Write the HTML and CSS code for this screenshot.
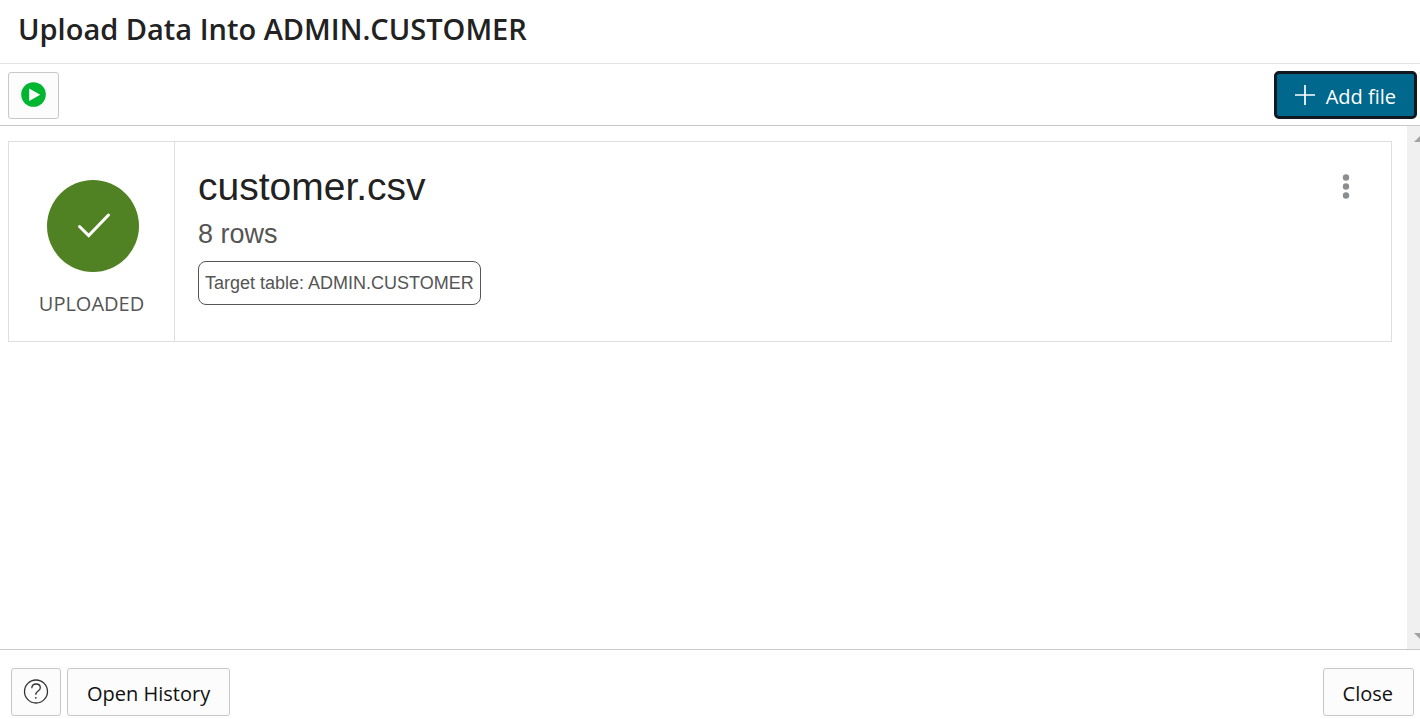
FILE: index.html
```html
<!DOCTYPE html>
<html lang="en">
<head>
<meta charset="utf-8">
<meta name="viewport" content="width=device-width, initial-scale=1">
<title>Upload Data Into ADMIN.CUSTOMER</title>
<link rel="stylesheet" href="styles.css">
</head>
<body>
<div class="dialog">
  <header class="dialog-header">
    <h1 class="dialog-title">Upload Data Into ADMIN.CUSTOMER</h1>
  </header>
  <div class="toolbar">
    <button class="btn btn-icon btn-run" type="button" aria-label="Run">
      <svg width="25" height="26" viewBox="0 0 25 26" aria-hidden="true"><circle cx="12.500" cy="12.500" r="12.300" fill="#00b52f"/><path d="M8.200 6.500v12.400L19.200 12.700Z" fill="#fff"/></svg>
    </button>
    <button class="btn btn-primary" type="button">
      <svg width="20" height="20" viewBox="0 0 20 20" aria-hidden="true"><path d="M10 0v20M0 10h20" stroke="#fff" stroke-width="1.700"/></svg>
      <span>Add file</span>
    </button>
  </div>
  <main class="content">
    <div class="file-list">
      <article class="file-card">
        <div class="file-status">
          <svg class="status-icon" width="92" height="92" viewBox="0 0 92 92" aria-hidden="true"><circle cx="46" cy="46" r="46" fill="#508223"/><path d="M32.500 46.500l9.200 9L61.500 35" fill="none" stroke="#fff" stroke-width="3" stroke-linecap="round"/></svg>
          <span class="status-label">UPLOADED</span>
        </div>
        <div class="file-info">
          <h2 class="file-name">customer.csv</h2>
          <p class="file-rows">8 rows</p>
          <span class="file-target">Target table: ADMIN.CUSTOMER</span>
        </div>
        <button class="menu-button" type="button" aria-label="File actions">
          <svg width="8" height="26" viewBox="0 0 8 26" aria-hidden="true" fill="#8b8e91"><circle cx="4" cy="3.500" r="3.200"/><circle cx="4" cy="12.500" r="3.200"/><circle cx="4" cy="21.500" r="3.200"/></svg>
        </button>
      </article>
    </div>
    <div class="scroll-track" aria-hidden="true">
      <svg width="6" height="6" viewBox="0 0 6 6"><path d="M0 6L6 0V6Z" fill="#a3a3a3"/></svg>
      <svg width="6" height="6" viewBox="0 0 6 6"><path d="M0 0H6V6Z" fill="#a3a3a3"/></svg>
    </div>
  </main>
  <footer class="dialog-footer">
    <button class="btn btn-icon" type="button" aria-label="Help">
      <svg width="26" height="26" viewBox="0 0 26 26" aria-hidden="true" fill="none" stroke="#333" stroke-width="1.300"><circle cx="13" cy="13.500" r="11.500"/><path d="M8.800 10.200C8.800 7.500 10.500 6 13 6s4.300 1.400 4.300 3.700c0 3.500-4.500 3.200-4.500 7"/><circle cx="12.800" cy="19.800" r=".9" fill="#333" stroke="none"/></svg>
    </button>
    <button class="btn btn-text" type="button">Open History</button>
    <button class="btn btn-text btn-close" type="button">Close</button>
  </footer>
</div>
</body>
</html>
```

FILE: styles.css
```css
* {
  box-sizing: border-box;
}

body {
  margin: 0;
  background: #fff;
  color: #222;
  font-family: "Open Sans", "Noto Sans", sans-serif;
}

.dialog {
  display: flex;
  flex-direction: column;
  min-height: 100vh;
}

.dialog-header {
  padding: 9px 18px 14px;
  border-bottom: 1px solid #e4e4e4;
}

.dialog-title {
  margin: 0;
  font-size: 29px;
  line-height: 40px;
  font-weight: 600;
}

.toolbar {
  display: flex;
  align-items: center;
  justify-content: space-between;
  padding: 7px 3px 6px 8px;
  border-bottom: 1px solid #c8c8c8;
}

.btn {
  display: flex;
  align-items: center;
  justify-content: center;
  height: 48px;
  padding: 0;
  border: 1px solid #c8c8c8;
  border-radius: 3px;
  background: #fcfcfc;
  color: #111;
  font-family: inherit;
  font-size: 20px;
  line-height: 28px;
}

.btn-icon {
  width: 50px;
}

.btn-run {
  width: 51px;
  height: 47px;
  align-self: flex-end;
}

.btn-icon svg {
  margin-bottom: 2px;
}

.btn-text {
  padding: 4px 19px 0;
}

.btn-close {
  margin-left: auto;
  padding-right: 20px;
}

.btn-primary {
  gap: 11px;
  padding: 0 18px;
  border: 3px solid #101820;
  border-radius: 5px;
  background: #00688c;
  color: #fff;
}

.btn-primary span {
  padding-top: 4px;
}

.content {
  display: flex;
  flex: 1;
}

.file-list {
  flex: 1;
  padding: 15px 15px 15px 8px;
}

.file-card {
  display: flex;
  align-items: flex-start;
  border: 1px solid #dedfdf;
}

.file-status {
  display: flex;
  flex-direction: column;
  align-items: center;
  align-self: stretch;
  gap: 18px;
  width: 166px;
  padding: 38px 0 23px;
  border-right: 1px solid #dedfdf;
}

.status-icon {
  margin-left: 2px;
}

.status-label {
  color: #555;
  font-size: 20px;
  line-height: 28px;
}

.file-info {
  flex: 1;
  padding: 22px 23px;
  font-family: "Liberation Sans", Arial, sans-serif;
}

.file-name {
  margin: 0;
  font-size: 39px;
  line-height: 46px;
  font-weight: 400;
}

.file-rows {
  margin: 7px 0 10px;
  color: #555;
  font-size: 27px;
  line-height: 34px;
}

.file-target {
  display: inline-block;
  padding: 7px 6px;
  border: 1px solid #555;
  border-radius: 8px;
  color: #555;
  font-size: 18px;
  line-height: 28px;
}

.menu-button {
  display: flex;
  margin: 24px 33px 0 0;
  padding: 8px;
  border: 0;
  background: transparent;
}

.scroll-track {
  display: flex;
  flex-direction: column;
  align-items: flex-end;
  justify-content: space-between;
  width: 13px;
  padding: 10px 0;
  background: #f0f0f0;
}

.dialog-footer {
  display: flex;
  gap: 6px;
  padding: 18px 6px 3px 11px;
  border-top: 1px solid #c8c8c8;
}
```
